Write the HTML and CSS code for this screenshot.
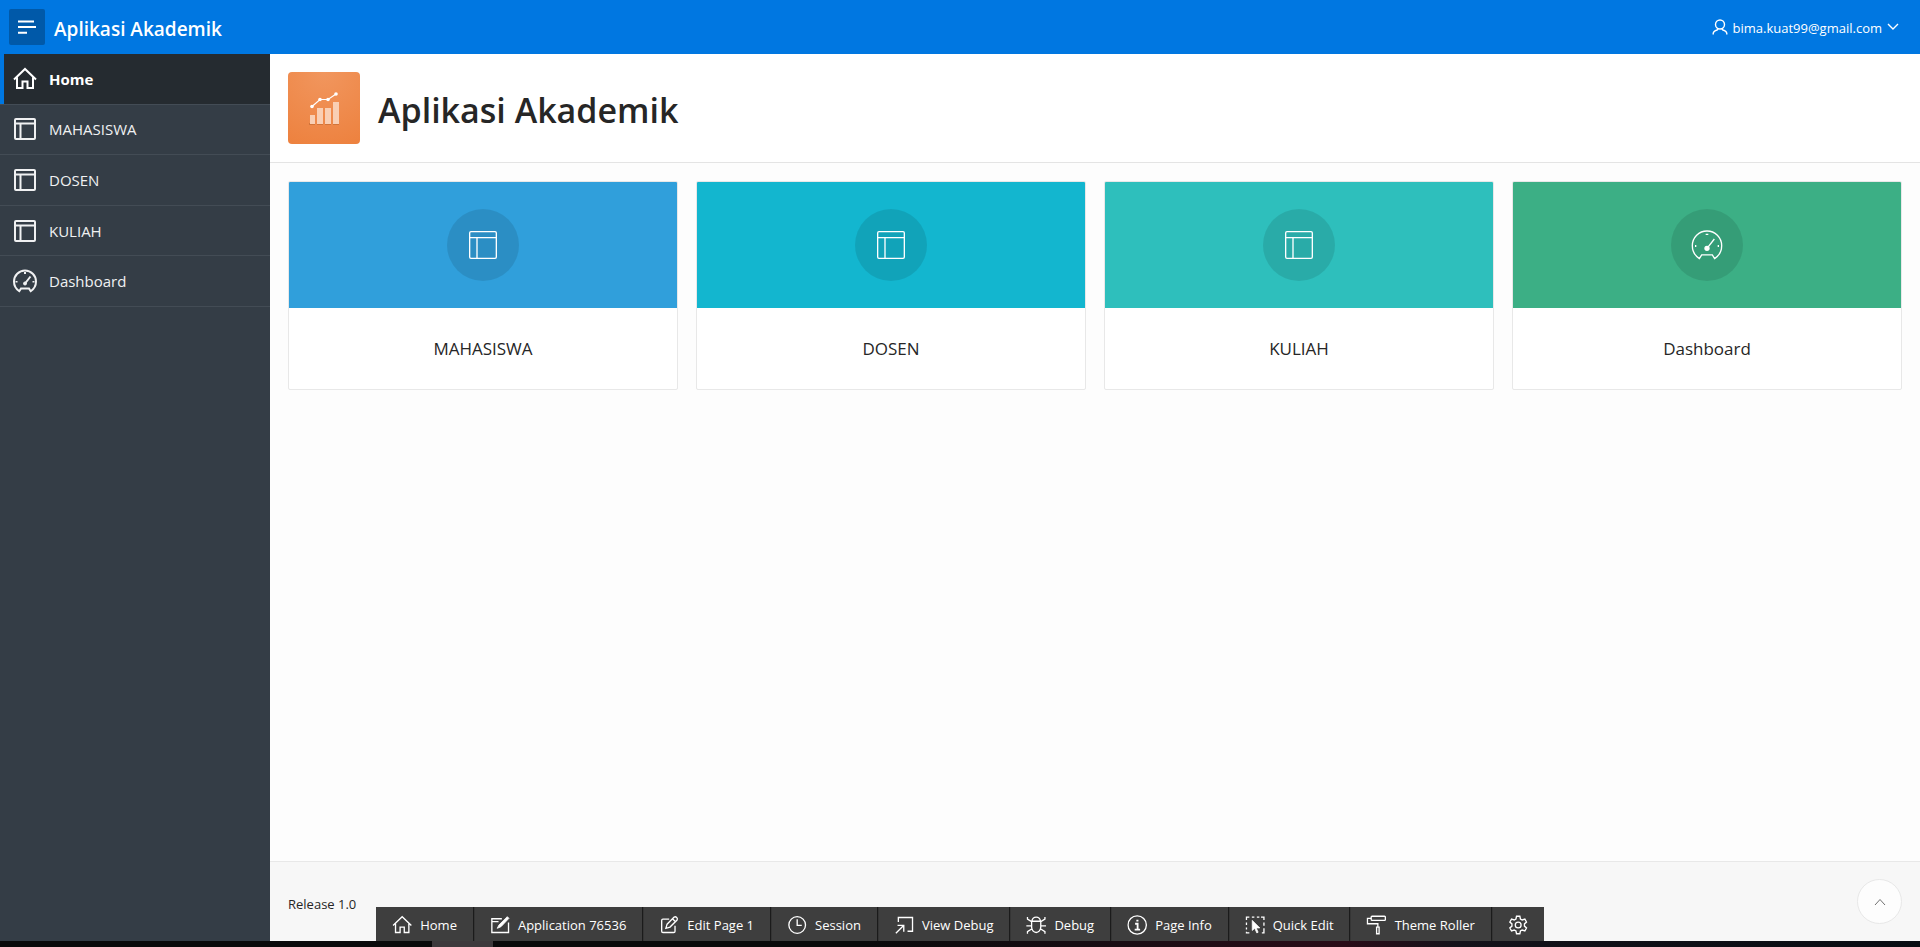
FILE: index.html
```html
<!DOCTYPE html>
<html lang="en">
<head>
<meta charset="utf-8">
<meta name="viewport" content="width=device-width, initial-scale=1">
<title>Aplikasi Akademik</title>
<link rel="stylesheet" href="styles.css">
</head>
<body>
<svg class="sprite" aria-hidden="true">
  <symbol id="i-home" viewBox="0 0 24 24"><path d="M1 12.500 12 2l11 10.500M4 10.500V21h5.500v-6.500h5V21H20V10.500" /></symbol>
  <symbol id="i-table" viewBox="0 0 24 24"><rect x="2" y="2" width="20" height="20" rx="1"/><path d="M2 6.500h20M7.500 6.500V22"/></symbol>
  <symbol id="i-dash" viewBox="0 0 24 24"><path d="M6.300 22.200C3.300 20.200 1 17 1 12.500a11 11 0 0 1 22 0c0 4.500-2.300 7.700-5.300 9.700l-1.700-2.800H8z"/><path d="M12 14.500 17.500 7.500M11 4h2M3.500 12v1.500M20.500 12v1.500"/><circle class="solid" cx="12" cy="14.500" r="1.500"/></symbol>
  <symbol id="i-user" viewBox="0 0 16 16"><circle cx="8" cy="5.500" r="4.500"/><path d="M1.200 15.500v-1c0-2 1.800-2.800 4-3.500l1-1.500M14.800 15.500v-1c0-2-1.800-2.800-4-3.500l-1-1.500"/></symbol>
  <symbol id="i-chevron" viewBox="0 0 12 12"><path d="m1 3 5 5L11 3"/></symbol>
</svg>

<header class="header">
  <button class="menu-toggle" type="button" aria-label="Toggle navigation">
    <svg viewBox="0 0 18 14"><path d="M0 1.500h16M0 7h18M0 12.800h9"/></svg>
  </button>
  <a class="brand" href="#">Aplikasi Akademik</a>
  <button class="user" type="button">
    <svg class="user-icon"><use href="#i-user"/></svg>
    <span>bima.kuat99@gmail.com</span>
    <svg class="user-arrow"><use href="#i-chevron"/></svg>
  </button>
</header>

<div class="shell">
  <nav class="sidebar" aria-label="Main">
    <ul class="nav">
      <li class="nav-item"><a class="nav-link active" href="#"><svg class="icon"><use href="#i-home"/></svg>Home</a></li>
      <li class="nav-item"><a class="nav-link" href="#"><svg class="icon"><use href="#i-table"/></svg>MAHASISWA</a></li>
      <li class="nav-item"><a class="nav-link" href="#"><svg class="icon"><use href="#i-table"/></svg>DOSEN</a></li>
      <li class="nav-item"><a class="nav-link" href="#"><svg class="icon"><use href="#i-table"/></svg>KULIAH</a></li>
      <li class="nav-item"><a class="nav-link" href="#"><svg class="icon"><use href="#i-dash"/></svg>Dashboard</a></li>
    </ul>
  </nav>

  <div class="page">
    <div class="hero">
      <svg class="app-icon" viewBox="0 0 72 72">
        <g fill="#9c4f20" opacity=".35"><path d="M21 51h6v2h-6zM29 51h6v2h-6zM37 51h6v2h-6zM45 51h6v2h-6z"/></g>
        <g fill="#f9cfb4"><path d="M22 43h5v9h-5zM29 36h6v16h-6zM37 36h6v16h-6zM45 30h6v22h-6z"/></g>
        <path d="M24 34.500 32 27.500h8l8-5.500" fill="none" stroke="#fff" stroke-width="1.200"/>
        <g fill="#fff"><circle cx="24" cy="34.500" r="1.800"/><circle cx="32" cy="27.500" r="1.800"/><circle cx="40" cy="27.500" r="1.800"/><circle cx="48" cy="22" r="1.800"/></g>
      </svg>
      <h1 class="title">Aplikasi Akademik</h1>
    </div>

    <main class="cards">
      <a class="card" href="#"><span class="card-top blue"><span class="disc"><svg><use href="#i-table"/></svg></span></span><span class="card-name">MAHASISWA</span></a>
      <a class="card" href="#"><span class="card-top cyan"><span class="disc"><svg><use href="#i-table"/></svg></span></span><span class="card-name">DOSEN</span></a>
      <a class="card" href="#"><span class="card-top teal"><span class="disc"><svg><use href="#i-table"/></svg></span></span><span class="card-name">KULIAH</span></a>
      <a class="card" href="#"><span class="card-top green"><span class="disc"><svg><use href="#i-dash"/></svg></span></span><span class="card-name">Dashboard</span></a>
    </main>

    <footer class="footer">
      <span>Release 1.0</span>
      <button class="to-top" type="button" aria-label="Back to top"><svg viewBox="0 0 12 8"><path d="M1 7 6 1.500 11 7"/></svg></button>
    </footer>
  </div>
</div>

<div class="toolbar" role="toolbar" aria-label="Developer toolbar">
  <button class="tool" type="button"><svg><use href="#i-home"/></svg>Home</button>
  <button class="tool" type="button"><svg viewBox="0 0 24 24"><path d="M14 4.500H2V21h20V9M2 8h8"/><path class="solid" d="m20.500 2 2 2L13 14l-4.500 2L10.500 12z"/></svg>Application 76536</button>
  <button class="tool" type="button"><svg viewBox="0 0 24 24"><path d="M12 5H4.500Q3 5 3 6.500v13Q3 21 4.500 21h13q1.500 0 1.500-1.500V13M8 16l1.500-5L18 2.500q1.500-1 3 .5t.5 3L13 14.500zM16 4.500l3.500 3.500"/></svg>Edit Page 1</button>
  <button class="tool" type="button"><svg viewBox="0 0 24 24"><circle cx="12" cy="12" r="10"/><path d="M12 5v7.500h5.500"/></svg>Session</button>
  <button class="tool" type="button"><svg viewBox="0 0 24 24"><path d="M5 8.500V3h17v16.500h-6M2 22l9-9M4 12.500h7.500V20"/></svg>View Debug</button>
  <button class="tool" type="button"><svg viewBox="0 0 24 24"><path d="M7 7.500a5 5 0 0 1 10 0zM6.500 7.500v7a5.500 6.500 0 0 0 11 0v-7M1.500 2.500V5L6.500 8M22.500 2.500V5l-5 3M0 13h6.500M24 13h-6.500M1.500 22.500V20l5.500-3.500M22.500 22.500V20L17 16.500"/></svg>Debug</button>
  <button class="tool" type="button"><svg viewBox="0 0 24 24"><circle cx="12" cy="12" r="11"/><path stroke-width="2.200" d="M9.500 10.500H12.500V17M9 17.500h6.500M11 6.800h2.500"/></svg>Page Info</button>
  <button class="tool" type="button"><svg viewBox="0 0 24 24"><path d="M1.500 6V2.500H5M8 2.500h3M14 2.500h3M19 2.500h3.500V6M22.500 9v4M22.500 16v5.500H20M1.500 9v3M1.500 15v2.500M1.500 20v1.500H5"/><path class="solid" d="M8.500 6.500v12l3-2.500 2.500 5.500 1.500-.8L13.200 15.500h4.300z"/></svg>Quick Edit</button>
  <button class="tool" type="button"><svg viewBox="0 0 24 24"><rect x="6" y="1.500" width="17" height="5" rx="1"/><path d="M6 4H1.500v6.500H14V14M12.500 14.500h3v8h-3z"/></svg>Theme Roller</button>
  <button class="tool" type="button" aria-label="Options"><svg viewBox="0 0 24 24"><path d="M10 1.500h4l.7 3.300 2.100 1.200 3.200-1 2 3.400-2.500 2.300v2.600l2.500 2.300-2 3.400-3.200-1-2.100 1.200-.7 3.300h-4l-.7-3.300L7.200 18 4 19l-2-3.400 2.500-2.300v-2.600L2 8.400 4 5l3.200 1 2.100-1.200z"/><circle cx="12" cy="12" r="3.500"/></svg></button>
</div>
<div class="taskbar"><span class="task"></span></div>
</body>
</html>
```
FILE: styles.css
```css
* { box-sizing: border-box; }
body {
  margin: 0;
  min-height: 100vh;
  display: flex;
  flex-direction: column;
  background: #fdfdfd;
  color: #262626;
  font-family: "Open Sans", "Noto Sans", sans-serif;
  font-size: 14px;
}
a { color: inherit; text-decoration: none; }
button {
  margin: 0;
  padding: 0;
  border: 0;
  background: none;
  color: inherit;
  font: inherit;
  cursor: pointer;
}
svg { fill: none; stroke: currentColor; stroke-width: 2; flex: none; }
.solid { fill: currentColor; stroke-width: 1; }
.sprite { position: absolute; width: 0; height: 0; }

.header {
  display: flex;
  align-items: center;
  height: 54px;
  padding: 0 21px 0 9px;
  background: #0077e1;
  color: #fff;
}
.menu-toggle {
  display: grid;
  place-items: center;
  width: 36px;
  height: 36px;
  border-radius: 2px;
  background: #0059a9;
}
.menu-toggle svg { width: 18px; height: 14px; }
.brand { margin-left: 9px; padding-top: 3px; font-size: 19px; font-weight: 600; }
.user { display: flex; align-items: center; gap: 5px; margin-left: auto; font-size: 13px; }
.user span { padding-top: 2px; }
.user-icon { width: 16px; height: 16px; stroke-width: 1.400; }
.user-arrow { width: 12px; height: 12px; stroke-width: 1.400; }

.shell { flex: 1; display: flex; }
.sidebar { width: 270px; flex: none; background: #343d46; color: #f0f1f2; }
.nav {
  display: grid;
  grid-auto-rows: 1fr;
  height: 253px;
  margin: 0;
  padding: 0;
  list-style: none;
}
.nav-item { border-bottom: 1px solid #434c55; }
.nav-link {
  display: flex;
  align-items: center;
  gap: 12px;
  height: 100%;
  padding-left: 13px;
  font-size: 15px;
}
.nav-link.active {
  padding-left: 9px;
  border-left: 4px solid #0077e1;
  background: #252b30;
  color: #fff;
  font-weight: 700;
}
.icon { width: 24px; height: 24px; }

.page { flex: 1; min-width: 0; display: flex; flex-direction: column; }
.hero {
  display: flex;
  align-items: center;
  gap: 18px;
  padding: 18px;
  border-bottom: 1px solid #e4e4e4;
  background: #fff;
}
.app-icon {
  width: 72px;
  height: 72px;
  border-radius: 4px;
  background: radial-gradient(circle at 50% 0, #f1965e, #ed813e);
  stroke: none;
}
.title { margin: 0; padding-top: 4px; font-size: 34px; line-height: 48px; font-weight: 600; }

.cards {
  flex: 1;
  display: grid;
  grid-template-columns: repeat(4, 1fr);
  align-items: start;
  gap: 18px;
  padding: 18px;
}
.card {
  display: flex;
  flex-direction: column;
  overflow: hidden;
  border: 1px solid #e8e8e8;
  border-radius: 2px;
  background: #fff;
}
.card-top { display: grid; place-items: center; padding: 27px; }
.blue { background: #309fdb; }
.cyan { background: #13b6cf; }
.teal { background: #2ebfbc; }
.green { background: #3caf85; }
.disc {
  display: grid;
  place-items: center;
  width: 72px;
  height: 72px;
  border-radius: 50%;
  background: rgba(0, 0, 0, .1);
  color: #fff;
}
.disc svg { width: 32px; height: 32px; stroke-width: 1; }
.card-name { padding: 29px 18px 28px; font-size: 17px; line-height: 24px; text-align: center; }

.footer {
  display: flex;
  align-items: center;
  justify-content: space-between;
  height: 80px;
  padding: 0 18px;
  border-top: 1px solid #e8e8e8;
  background: #f7f7f7;
  font-size: 13px;
}
.footer span { padding-top: 4px; }
.to-top {
  display: grid;
  place-items: center;
  width: 45px;
  height: 45px;
  border: 1px solid #e8e8e8;
  border-radius: 50%;
  background: #fdfdfd;
  color: #707070;
}
.to-top svg { width: 12px; height: 8px; stroke-width: 1; }

.toolbar {
  position: fixed;
  bottom: 6px;
  left: 50%;
  display: flex;
  height: 34px;
  transform: translateX(-50%);
  background: #3e3e3e;
  color: #fff;
  font-size: 13px;
  white-space: nowrap;
}
.tool { display: flex; align-items: center; gap: 8px; padding: 2px 16px 0; }
.tool + .tool { border-left: 1px solid #141414; }
.tool svg { width: 20px; height: 20px; stroke-width: 1.600; }
.taskbar {
  height: 6px;
  padding-left: 432px;
  background: linear-gradient(90deg, #0a0a0b 0 45%, #160c12 56%, #2a0c18 70%, #14121a 76%, #080c12);
}
.task { display: block; width: 61px; height: 6px; background: #3d393c; }
```
